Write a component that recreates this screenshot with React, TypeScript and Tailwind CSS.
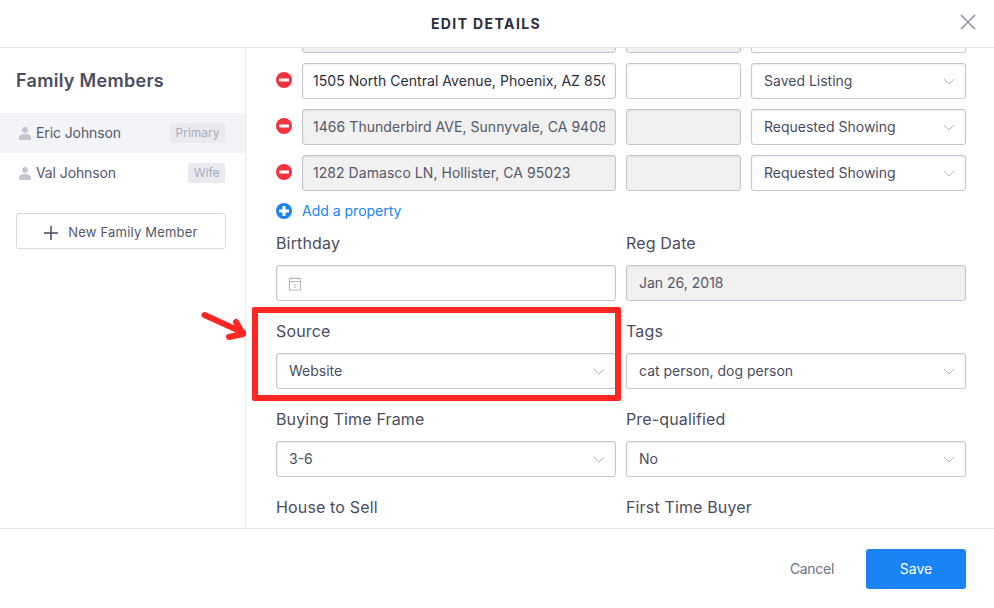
import React from "react";

const Chevron = () => (
  <svg width="12" height="7" viewBox="0 0 12 7" fill="none" className="shrink-0">
    <path d="M1 1l5 5 5-5" stroke="#b4b6c1" strokeWidth="1" />
  </svg>
);

const Select = ({ value, className = "" }: { value: string; className?: string }) => (
  <div className={`h-9 flex items-center justify-between pl-3 pr-[10px] bg-white border border-[#c3c5d0] rounded-[3px] shadow-[inset_0_1px_2px_rgba(0,0,0,0.08)] text-[14px] text-[#4a4d5e] ${className}`}>
    <span className="mb-px">{value}</span>
    <Chevron />
  </div>
);

const Minus = () => (
  <svg width="16" height="16" viewBox="0 0 16 16" className="shrink-0 mb-[2px]">
    <circle cx="8" cy="8" r="8" fill="#f5333f" />
    <rect x="3" y="6.500" width="10" height="3" rx="0.600" fill="#fff" />
  </svg>
);

const Plus = () => (
  <svg width="16" height="16" viewBox="0 0 16 16" className="shrink-0">
    <circle cx="8" cy="8" r="8" fill="#1a83f5" />
    <rect x="3" y="6.500" width="10" height="3" fill="#fff" />
    <rect x="6.500" y="3" width="3" height="10" fill="#fff" />
  </svg>
);

const Person = () => (
  <svg width="12" height="13" viewBox="0 0 12 13" className="shrink-0">
    <circle cx="6" cy="3" r="2.900" fill="#c3c5d0" />
    <path d="M0 13v-2.400C0 8.400 2.500 7 6 7s6 1.400 6 3.600V13z" fill="#c3c5d0" />
  </svg>
);

const PropertyRow = ({ address, status, disabled }: { address: string; status: string; disabled?: boolean }) => (
  <div className="flex items-center gap-[10px] h-9">
    <Minus />
    <div className={`w-[314px] h-9 flex items-center pl-[10px] pr-[10px] border border-[#c3c5d0] rounded-[3px] shadow-[inset_0_1px_2px_rgba(0,0,0,0.08)] overflow-hidden whitespace-nowrap text-[14px] tracking-[0.05px] ${disabled ? "bg-[#f1f1f1] text-[#55586a]" : "bg-white text-[#2b2e3d]"}`}>
      <span className="block overflow-hidden mb-px">{address}</span>
    </div>
    <div className={`w-[115px] h-9 border border-[#c3c5d0] rounded-[3px] shadow-[inset_0_1px_2px_rgba(0,0,0,0.08)] ${disabled ? "bg-[#f1f1f1]" : "bg-white"}`} />
    <Select value={status} className="w-[215px]" />
  </div>
);

const Label = ({ children }: { children: React.ReactNode }) => (
  <div className="h-[22px] leading-[22px] text-[16px] text-[#4a4d5e] tracking-[0.15px]">{children}</div>
);

const Field = ({ label, children }: { label: string; children?: React.ReactNode }) => (
  <div className="w-[340px] flex flex-col gap-[11px]">
    <Label>{label}</Label>
    {children}
  </div>
);

const Member = ({ name, tag, active }: { name: string; tag: string; active?: boolean }) => (
  <div className={`h-10 flex items-center justify-between pl-[19px] pr-5 ${active ? "bg-[#f3f4f8]" : ""}`}>
    <div className="flex items-center gap-[5px]">
      <Person />
      <span className="mb-px text-[14px] text-[#55586a] tracking-[-0.1px]">{name}</span>
    </div>
    <span className="h-5 leading-5 px-[5.5px] rounded-[2px] bg-[#e9eaef] text-[12px] text-[#a9abb8]">{tag}</span>
  </div>
);

export default function App() {
  return (
    <div className="relative w-[994px] h-[608px] bg-white overflow-hidden flex flex-col font-['Inter',sans-serif]">
      <header className="relative h-12 shrink-0 flex items-center justify-center pr-[22px] border-b border-[#e8e8ee]">
        <h1 className="text-[14px] font-bold tracking-[1.4px] text-[#2b2e3d]">EDIT DETAILS</h1>
        <svg width="16" height="16" viewBox="0 0 16 16" className="absolute left-[960px] top-[14px]">
          <path d="M1 1l14 14M15 1L1 15" stroke="#8f92a1" strokeWidth="1.500" />
        </svg>
      </header>

      <div className="flex h-[480px] shrink-0">
        <aside className="w-[246px] shrink-0 border-r border-[#e8e8ee]">
          <h2 className="pl-4 pr-4 pt-[21px] h-[65px] text-[18px] leading-[24px] font-semibold text-[#4a4d5e] tracking-[0.3px]">Family Members</h2>
          <Member name="Eric Johnson" tag="Primary" active />
          <Member name="Val Johnson" tag="Wife" />
          <div className="px-4 mt-5">
            <button className="w-[210px] h-9 pt-1 flex items-center justify-center gap-[10px] border border-[#d9dae0] rounded-[3px] bg-white text-[13px] tracking-[0.2px] text-[#55586a]">
              <svg width="14" height="14" viewBox="0 0 14 14">
                <path d="M7 0v14M0 7h14" stroke="#4a4d5e" strokeWidth="1.500" />
              </svg>
              New Family Member
            </button>
          </div>
        </aside>

        <main className="flex-1 pl-[30px] overflow-hidden">
          <div className="mt-[-31px] flex flex-col">
            <div className="flex flex-col gap-[10px]">
              <PropertyRow address="" status="" disabled />
              <PropertyRow address="1505 North Central Avenue, Phoenix, AZ 85004" status="Saved Listing" />
              <PropertyRow address="1466 Thunderbird AVE, Sunnyvale, CA 94089" status="Requested Showing" disabled />
              <PropertyRow address="1282 Damasco LN, Hollister, CA 95023" status="Requested Showing" disabled />
            </div>
            <div className="flex items-center gap-[10px] h-4 mt-3">
              <Plus />
              <span className="mb-px text-[14px] text-[#1a83f5]">Add a property</span>
            </div>
            <div className="grid grid-cols-[340px_340px] gap-x-[10px] gap-y-[19px] mt-[13px]">
              <Field label="Birthday">
                <div className="h-9 flex items-center pl-3 bg-white border border-[#c3c5d0] rounded-[3px] shadow-[inset_0_1px_2px_rgba(0,0,0,0.08)]">
                  <svg width="13" height="15" viewBox="0 0 13 15" fill="none" stroke="#b4b6c1" strokeWidth="1">
                    <rect x="0.500" y="2.500" width="11" height="11.500" />
                    <path d="M.5 5.500h11M3 .5v3M9 .5v3M6 8v4" />
                  </svg>
                </div>
              </Field>
              <Field label="Reg Date">
                <div className="h-9 flex items-center pl-3 bg-[#f1f1f1] border border-[#c3c5d0] rounded-[3px] shadow-[inset_0_1px_2px_rgba(0,0,0,0.08)] text-[14px] text-[#55586a]"><span className="mb-px">Jan 26, 2018</span></div>
              </Field>
              <Field label="Source"><Select value="Website" /></Field>
              <Field label="Tags"><Select value="cat person, dog person" /></Field>
              <Field label="Buying Time Frame"><Select value="3-6" /></Field>
              <Field label="Pre-qualified"><Select value="No" /></Field>
              <Field label="House to Sell" />
              <Field label="First Time Buyer" />
            </div>
          </div>
        </main>
      </div>

      <footer className="flex-1 border-t border-[#e8e8ee] flex items-center justify-end pr-7 gap-[32px]">
        <button className="text-[14px] text-[#6f7282] tracking-[-0.3px]">Cancel</button>
        <button className="w-[100px] h-10 rounded-[3px] bg-[#1a83f5] text-white text-[14px]">Save</button>
      </footer>

      <div className="absolute left-[252px] top-[307px] w-[369px] h-[94px] border-[6px] border-[#fe2722] rounded-[2px]" />
      <svg width="50" height="32" viewBox="0 0 50 32" className="absolute left-[200px] top-[311px]">
        <path d="M4.500 4L43 21.500" stroke="#fe2722" strokeWidth="6" strokeLinecap="round" />
        <path d="M36 11L43 23L29 26" stroke="#fe2722" strokeWidth="6" strokeLinecap="round" strokeLinejoin="round" fill="none" />
      </svg>
    </div>
  );
}
